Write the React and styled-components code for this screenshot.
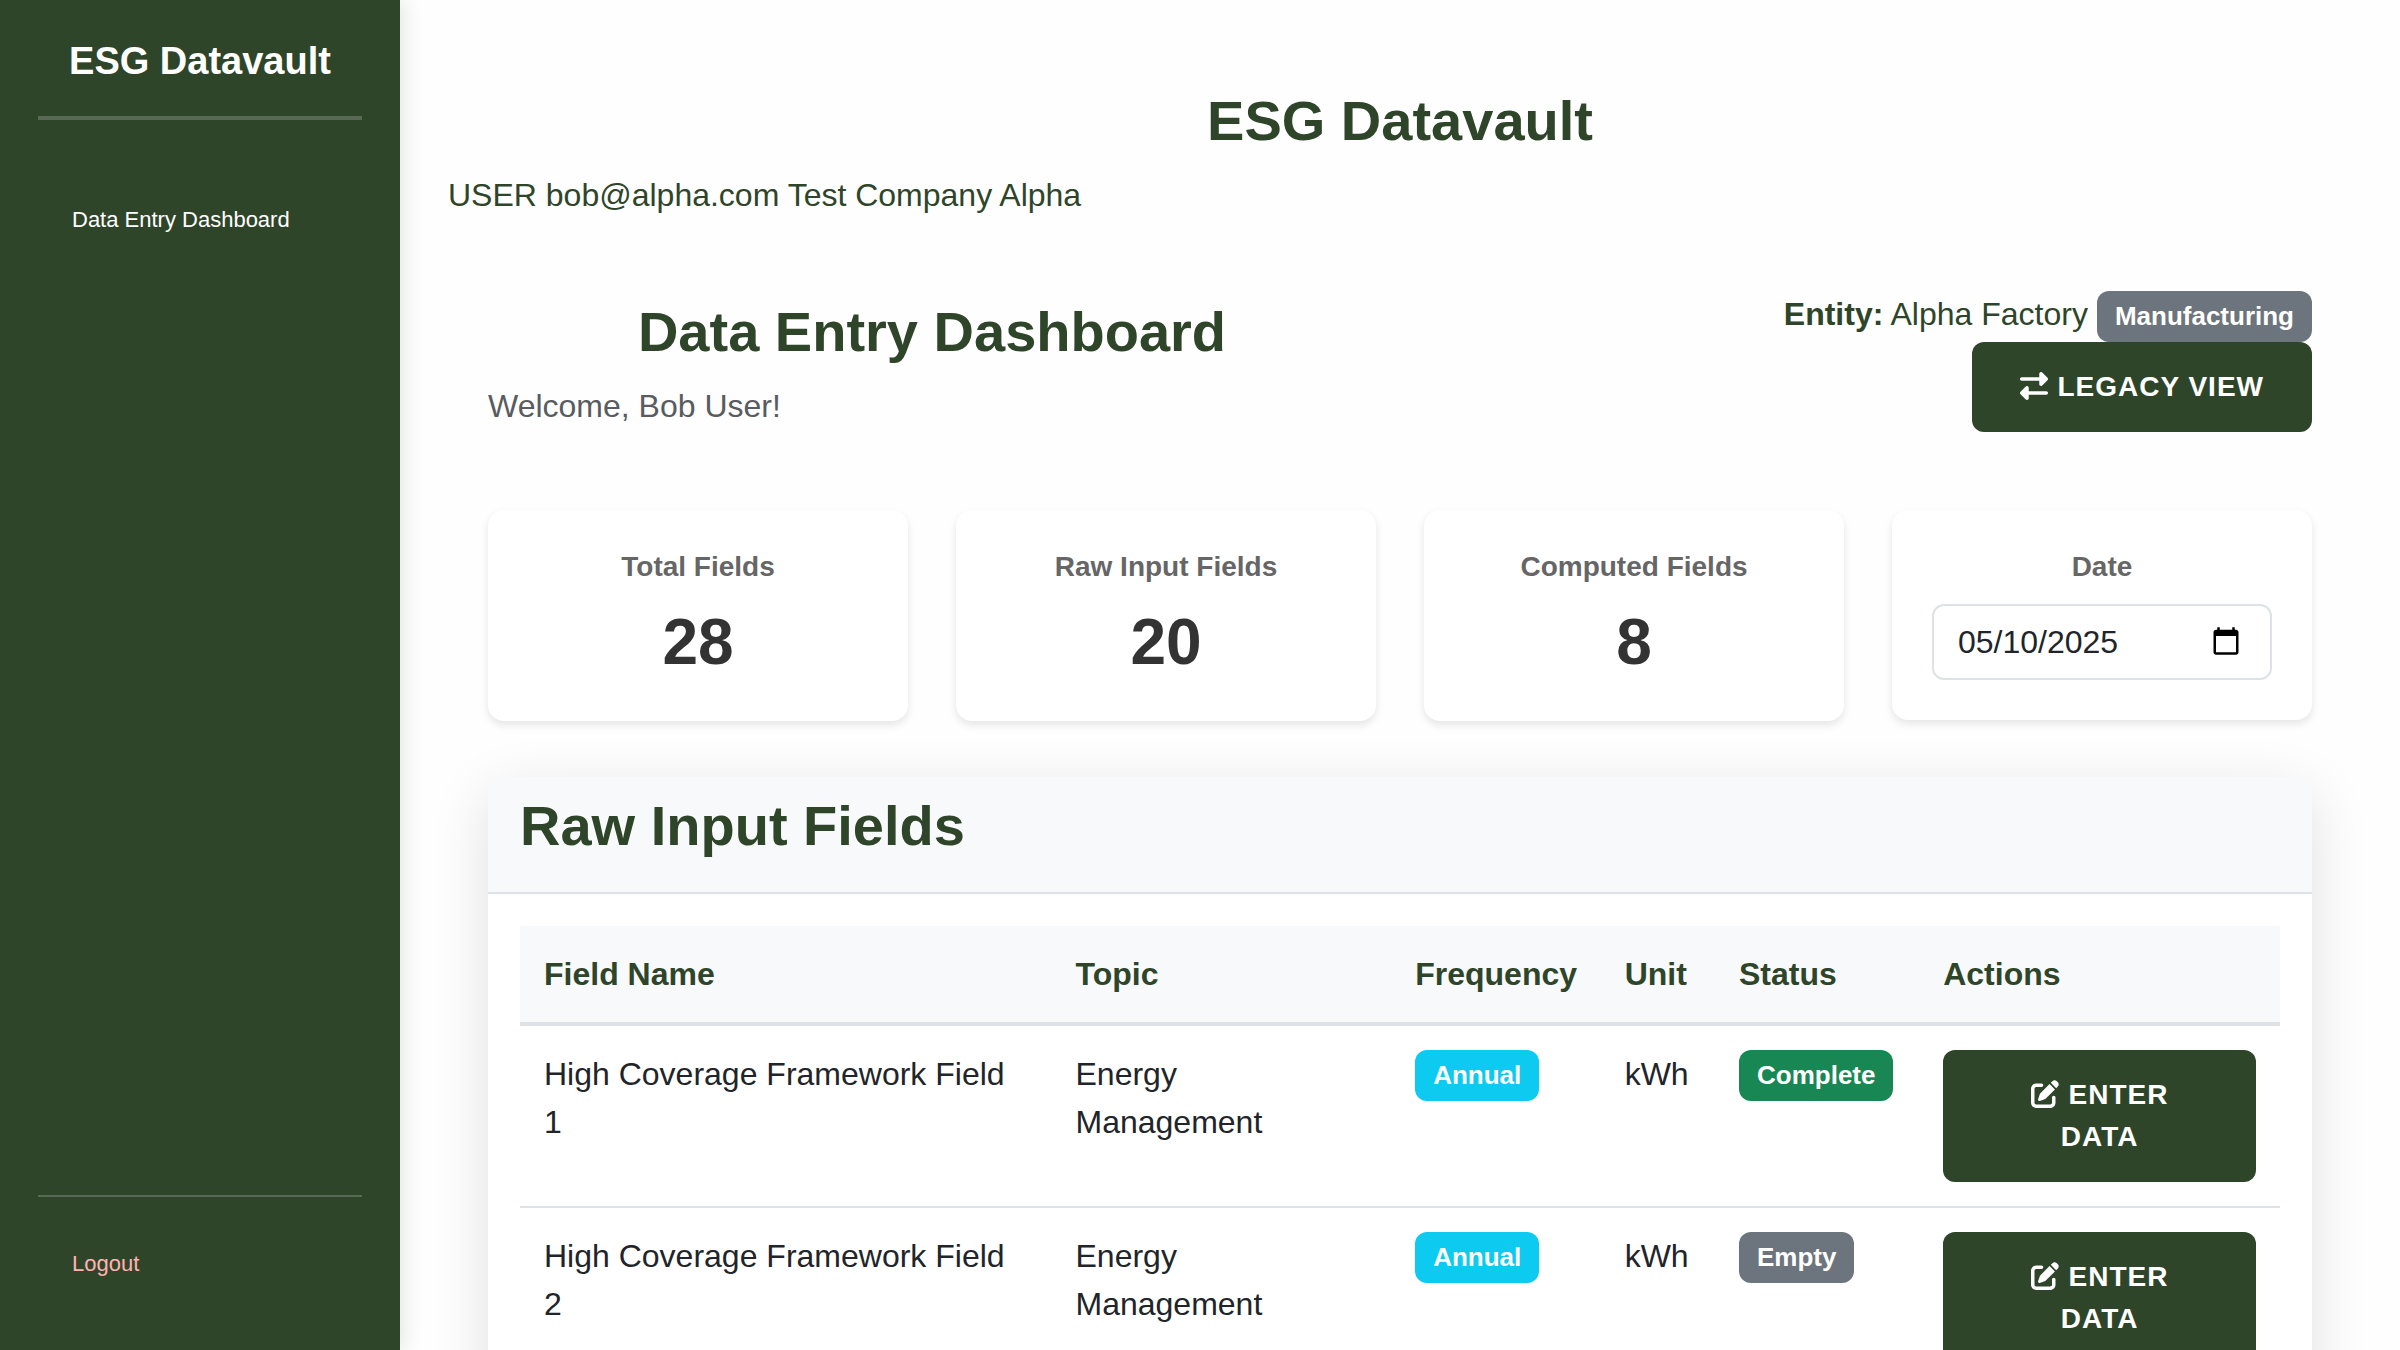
import React from "react";
import styled, { createGlobalStyle } from "styled-components";
import { FaRightLeft, FaPenToSquare } from "react-icons/fa6";

const green = "#2f4529";

const GlobalStyle = createGlobalStyle`
  *, *::before, *::after { box-sizing: border-box; }
  body {
    margin: 0;
    background: #fefefe;
    color: ${green};
    font: 32px/48px "Liberation Sans", Arial, sans-serif;
  }
  h1, h2, h3, p { margin: 0; }
`;

const Shell = styled.div`
  display: flex;
  height: 100vh;
`;

const Sidebar = styled.aside`
  display: flex;
  flex-direction: column;
  flex: 0 0 400px;
  z-index: 1;
  padding: 38px;
  background: ${green};
  box-shadow: 4px 0 20px rgba(0, 0, 0, 0.1);
`;

const Brand = styled.h2`
  padding-bottom: 32px;
  border-bottom: 4px solid rgba(255, 255, 255, 0.2);
  color: #fff;
  font-size: 38px;
  line-height: 46px;
  text-align: center;
`;

const SideNav = styled.nav`
  flex: 1;
  padding: 83px 34px 0;
`;

const SideLink = styled.a`
  color: ${(p) => (p.$danger ? "#ffb3b3" : "#fff")};
  display: block;
  font-size: 22px;
  line-height: 33px;
  text-decoration: none;
`;

const SideFooter = styled.div`
  padding: 50px 34px 32px;
  border-top: 2px solid rgba(255, 255, 255, 0.2);
`;

const Main = styled.main`
  flex: 1;
  min-width: 0;
  padding: 88px 48px 0;
  overflow-y: auto;
  scrollbar-width: none;
`;

const Title = styled.h1`
  margin-bottom: 18px;
  font-size: 56px;
  line-height: 65px;
  text-align: ${(p) => p.$align || "center"};
`;

const Content = styled.div`
  padding: 71px 40px 48px;
`;

const Intro = styled.header`
  display: grid;
  grid-template-columns: 1fr 1fr;
  gap: 48px;
  margin-bottom: 78px;
`;

const Welcome = styled.div`
  padding-top: 9px;
`;

const Muted = styled.p`
  color: #595c5f;
`;

const Entity = styled.div`
  display: flex;
  flex-direction: column;
  align-items: flex-end;
`;

const badgeColors = { info: "#0dcaf0", success: "#198754", neutral: "#6c757d" };

const Badge = styled.span`
  display: inline-block;
  padding: 12px 18px;
  border-radius: 12px;
  background: ${(p) => badgeColors[p.$tone]};
  color: #fff;
  font-size: 26px;
  font-weight: 700;
  line-height: 27px;
  vertical-align: top;
`;

const EntityLine = styled.div`
  display: flex;
  align-items: flex-start;
  gap: 9px;
  min-height: 52px;

  ${Badge} { align-self: flex-end; }
`;

const Button = styled.button`
  padding: 24px 48px;
  border: 0;
  border-radius: 12px;
  background: ${green};
  color: #fff;
  font: 700 28px/42px "Liberation Sans", Arial, sans-serif;
  letter-spacing: 1px;
  text-align: center;
  text-transform: uppercase;
  vertical-align: top;

  svg {
    margin-right: 1px;
    vertical-align: -4px;
  }
`;

const Stats = styled.section`
  display: grid;
  grid-template-columns: repeat(4, 1fr);
  align-items: start;
  gap: 48px;
  margin-bottom: 56px;
`;

const Stat = styled.div`
  padding: 40px;
  border-radius: 16px;
  background: #fff;
  box-shadow: 0 4px 8px rgba(0, 0, 0, 0.1);
  text-align: center;
`;

const StatLabel = styled.h3`
  display: block;
  margin-bottom: 20px;
  color: #666;
  font-size: 28px;
  font-weight: 700;
  line-height: 34px;
`;

const StatValue = styled.div`
  color: #333;
  font-size: 64px;
  font-weight: 700;
  line-height: 77px;
`;

const DateInput = styled.input`
  display: block;
  width: 100%;
  height: 76px;
  padding: 12px 24px;
  border: 2px solid #dee2e6;
  border-radius: 12px;
  background: #fff;
  color: #212529;
  font: 32px/48px "Liberation Sans", Arial, sans-serif;

  &::-webkit-datetime-edit-month-field,
  &::-webkit-datetime-edit-day-field,
  &::-webkit-datetime-edit-year-field {
    padding: 0;
  }

  &::-webkit-calendar-picker-indicator {
    margin-right: 2px;
  }
`;

const Panel = styled.section`
  border-radius: 16px;
  background: #fff;
  box-shadow: 0 16px 60px rgba(0, 0, 0, 0.12);
`;

const PanelHead = styled.div`
  padding: 16px 32px;
  border-bottom: 2px solid #dee2e6;
  border-radius: 16px 16px 0 0;
  background: #f8f9fb;
`;

const PanelBody = styled.div`
  padding: 32px;
`;

const Table = styled.table`
  width: 100%;
  border-collapse: separate;
  border-spacing: 0;
  table-layout: fixed;
  color: #212529;
`;

const Th = styled.th`
  width: ${(p) => p.$w};
  padding: 24px;
  border-bottom: 4px solid #dee2e6;
  background: #f8f9fb;
  color: ${green};
  text-align: left;
`;

const Td = styled.td`
  padding: 24px;
  border-bottom: 2px solid #dee2e6;
  vertical-align: top;
`;

const columns = [
  ["Field Name", "30.2%"],
  ["Topic", "19.3%"],
  ["Frequency", "11.9%"],
  ["Unit", "6.5%"],
  ["Status", "11.6%"],
  ["Actions", "20.5%"],
];

const stats = [
  ["Total Fields", 28],
  ["Raw Input Fields", 20],
  ["Computed Fields", 8],
];

const rows = [
  { name: "High Coverage Framework Field 1", topic: "Energy Management", frequency: "Annual", unit: "kWh", status: "Complete", tone: "success" },
  { name: "High Coverage Framework Field 2", topic: "Energy Management", frequency: "Annual", unit: "kWh", status: "Empty", tone: "neutral" },
];

export default function App() {
  return (
    <>
      <GlobalStyle />
      <Shell>
        <Sidebar>
          <Brand>ESG Datavault</Brand>
          <SideNav>
            <SideLink href="#dashboard">Data Entry Dashboard</SideLink>
          </SideNav>
          <SideFooter>
            <SideLink href="#logout" $danger>Logout</SideLink>
          </SideFooter>
        </Sidebar>
        <Main>
          <Title>ESG Datavault</Title>
          <p>USER bob@alpha.com Test Company Alpha</p>
          <Content>
            <Intro>
              <Welcome>
                <Title>Data Entry Dashboard</Title>
                <Muted>Welcome, Bob User!</Muted>
              </Welcome>
              <Entity>
                <EntityLine>
                  <span><strong>Entity:</strong> Alpha Factory</span>
                  <Badge $tone="neutral">Manufacturing</Badge>
                </EntityLine>
                <Button type="button"><FaRightLeft /> Legacy View</Button>
              </Entity>
            </Intro>
            <Stats>
              {stats.map(([label, value]) => (
                <Stat key={label}>
                  <StatLabel>{label}</StatLabel>
                  <StatValue>{value}</StatValue>
                </Stat>
              ))}
              <Stat>
                <StatLabel as="label" htmlFor="entry-date">Date</StatLabel>
                <DateInput id="entry-date" type="date" defaultValue="2025-05-10" />
              </Stat>
            </Stats>
            <Panel>
              <PanelHead>
                <Title as="h2" $align="left">Raw Input Fields</Title>
              </PanelHead>
              <PanelBody>
                <Table>
                  <thead>
                    <tr>{columns.map(([label, w]) => <Th key={label} $w={w} scope="col">{label}</Th>)}</tr>
                  </thead>
                  <tbody>
                    {rows.map((row) => (
                      <tr key={row.name}>
                        <Td>{row.name}</Td>
                        <Td>{row.topic}</Td>
                        <Td><Badge $tone="info">{row.frequency}</Badge></Td>
                        <Td>{row.unit}</Td>
                        <Td><Badge $tone={row.tone}>{row.status}</Badge></Td>
                        <Td><Button type="button"><FaPenToSquare /> Enter Data</Button></Td>
                      </tr>
                    ))}
                  </tbody>
                </Table>
              </PanelBody>
            </Panel>
          </Content>
        </Main>
      </Shell>
    </>
  );
}
